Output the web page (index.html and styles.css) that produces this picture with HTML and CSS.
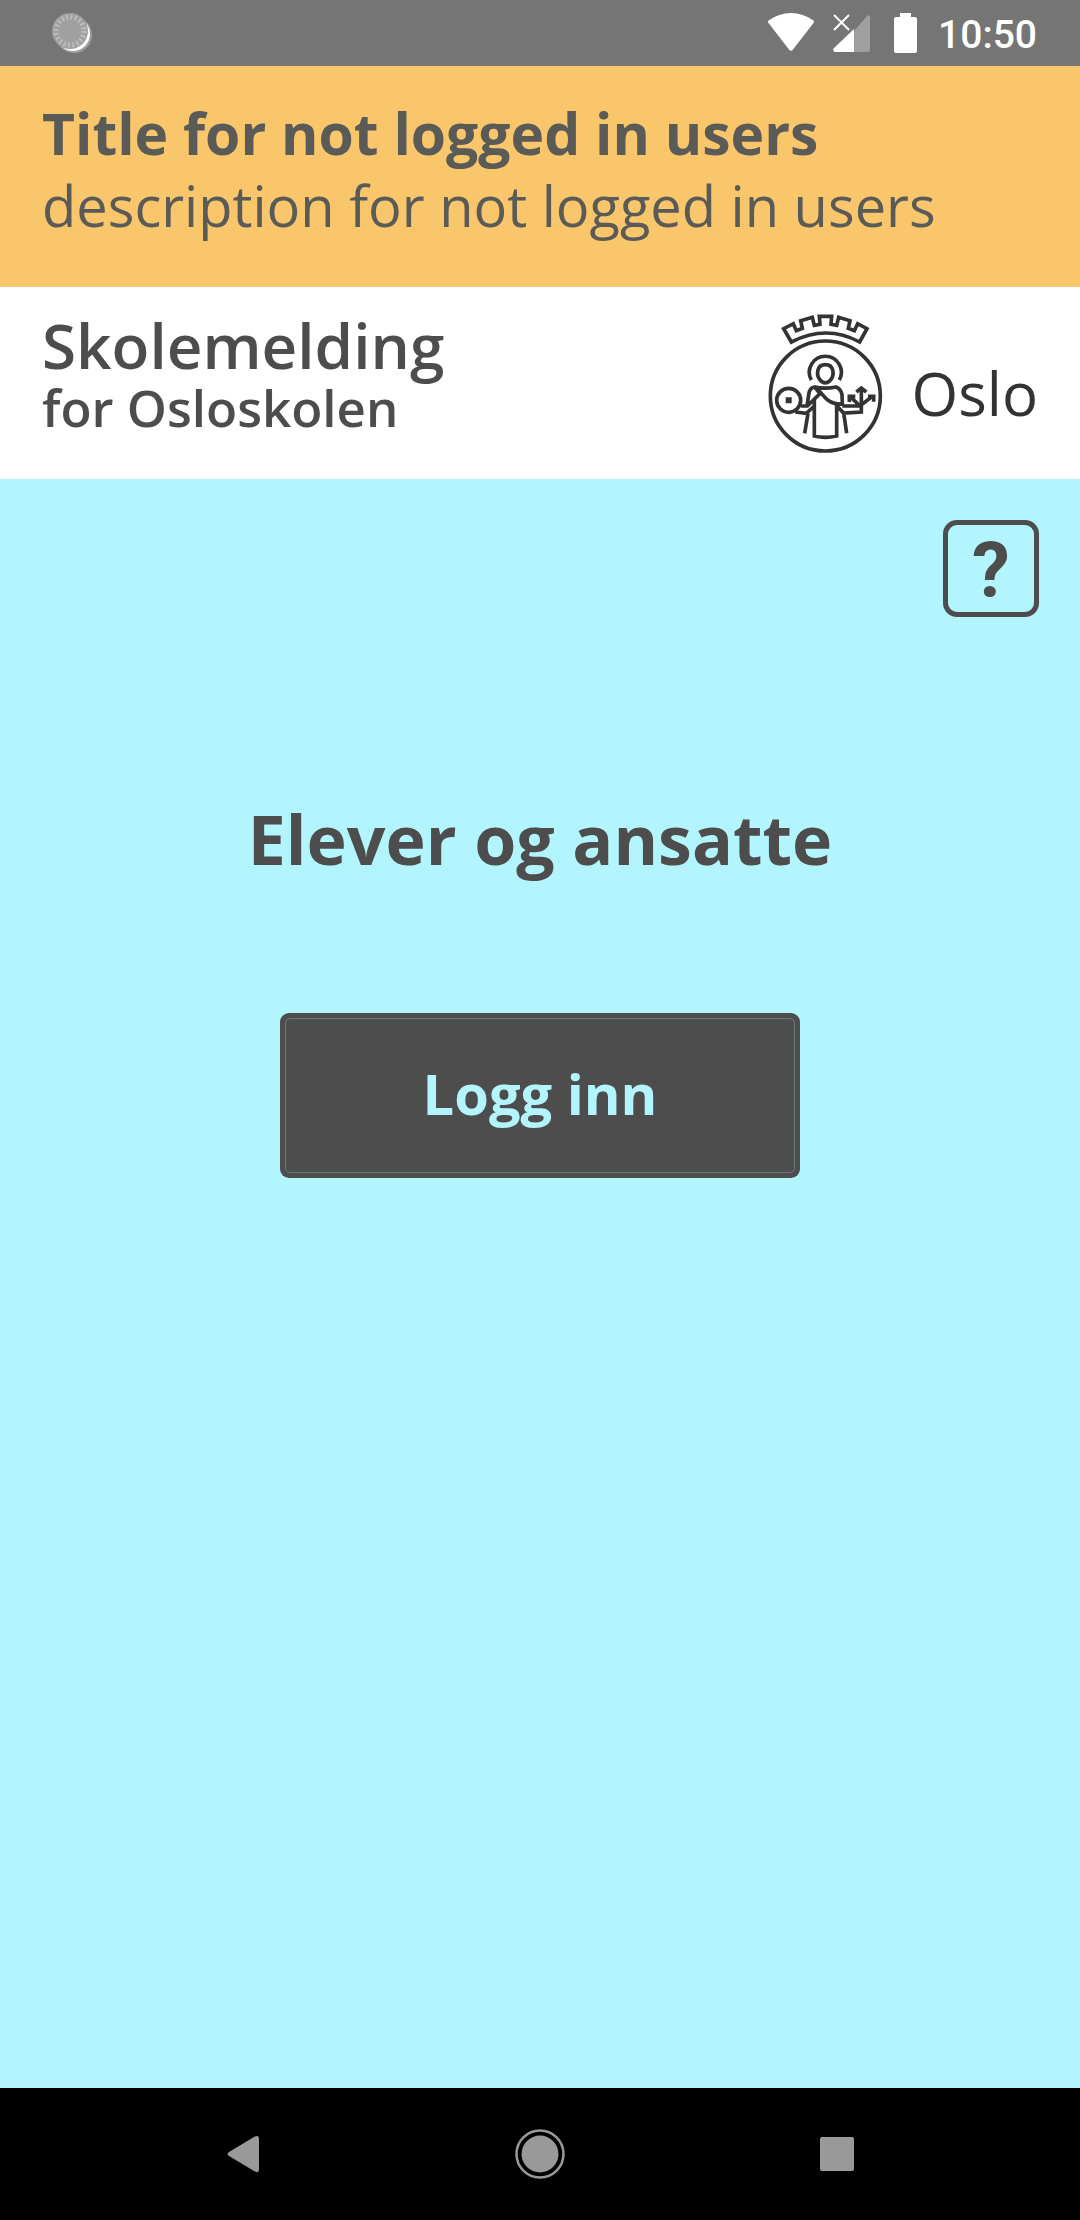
FILE: index.html
```html
<!DOCTYPE html>
<html lang="no">
<head>
  <meta charset="utf-8">
  <meta name="viewport" content="width=device-width, initial-scale=1">
  <title>Skolemelding</title>
  <link rel="stylesheet" href="styles.css">
</head>
<body>
  <div class="status-bar">
    <svg class="status-dial" width="40" height="42" viewBox="0 0 40 42" aria-hidden="true">
      <circle cx="22" cy="23" r="18" fill="#fff" opacity=".3"/>
      <circle cx="21" cy="22" r="17" fill="#fff"/>
      <circle cx="18" cy="19" r="18" fill="#a0a0a0"/>
      <circle cx="18" cy="19" r="14" fill="none" stroke="#bcbcbc" stroke-width="5" stroke-dasharray="2 2.398"/>
    </svg>
    <div class="status-icons">
      <svg class="icon-wifi" width="48" height="40" viewBox="0 0 48 40" aria-hidden="true">
        <path d="M1.500 10Q0 8.500 1.500 7.500Q12 0 24 0T46.500 7.500Q48 8.500 46.500 10L26 36.500Q24 39 22 36.500Z" fill="#fff"/>
      </svg>
      <svg class="icon-signal" width="38" height="40" viewBox="0 0 38 40" aria-hidden="true">
        <path d="M37 4V37Q37 39 35 39H21V18L34 3Q36 1 37 4Z" fill="#9f9f9f"/>
        <path d="M21 16V39H2Q-1 38 1 35Z" fill="#fff"/>
        <path d="M1 2L16 17M16 2L1 17" stroke="#fff" stroke-width="2"/>
      </svg>
      <svg class="icon-battery" width="23" height="40" viewBox="0 0 23 40" aria-hidden="true">
        <path d="M6 0H17V4H21Q23 4 23 6V38Q23 40 21 40H2Q0 40 0 38V6Q0 4 2 4H6Z" fill="#fff"/>
      </svg>
      <span class="clock">10:50</span>
    </div>
  </div>

  <section class="notice">
    <h2 class="notice-title">Title for not logged in users</h2>
    <p class="notice-text">description for not logged in users</p>
  </section>

  <header class="header">
    <h1 class="brand">
      <span class="brand-name">Skolemelding</span>
      <span class="brand-sub">for Osloskolen</span>
    </h1>
    <div class="logo">
      <svg width="115" height="139" viewBox="36 28 345 417" fill="none" stroke="#333" stroke-width="11" aria-hidden="true">
        <circle cx="208" cy="274" r="165"/>
        <path d="M106 112L83 72L112 57L121 78L139 71L134 48L169 38L175 62L192 59L190 35H227L225 59L242 62L248 38L282 48L277 71L295 78L305 57L333 72L311 112Q211 58 106 112Z"/>
        <path d="M166 226A48 48 0 1 1 250 226"/>
        <path d="M208 180C182 180 178 212 195 229Q208 240 221 229C238 212 234 180 208 180Z"/>
        <circle cx="98" cy="287" r="36"/>
        <path d="M91 280H105V294H91Z" fill="#333" stroke-width="4"/>
        <path d="M135 304H154L192 267L176 247Q161 248 158 270L153 304M118 322L151 326L175 304M156 326L146 386M175 281V394Q208 402 242 394V300M176 247Q208 254 240 247Q254 252 258 270L259 298Q223 300 204 275L180 248M239 300L263 325L316 322V252M259 304H312L348 276M312 304L285 278M263 325L272 386"/>
        <path d="M301 262L316 250L331 262M280 292V275H298M336 275H353V291"/>
      </svg>
      <span class="logo-text">Oslo</span>
    </div>
  </header>

  <main class="main">
    <button class="help" type="button" aria-label="Hjelp">?</button>
    <h2 class="login-title">Elever og ansatte</h2>
    <button class="login" type="button"><span class="login-label">Logg inn</span></button>
  </main>

  <nav class="nav-bar">
    <button class="nav-button" type="button" aria-label="Back">
      <svg width="34" height="38" viewBox="0 0 34 38" aria-hidden="true"><path d="M28 2Q33 -1 33 4V34Q33 39 28 36L3 21Q0 19 3 17Z" fill="#999"/></svg>
    </button>
    <button class="nav-button" type="button" aria-label="Home">
      <svg width="50" height="50" viewBox="0 0 50 50" aria-hidden="true"><circle cx="25" cy="25" r="23.500" fill="none" stroke="#999" stroke-width="2.500"/><circle cx="25" cy="25" r="18.500" fill="#999"/></svg>
    </button>
    <button class="nav-button" type="button" aria-label="Recent apps">
      <svg width="34" height="34" viewBox="0 0 34 34" aria-hidden="true"><rect width="34" height="34" rx="2" fill="#999"/></svg>
    </button>
  </nav>
</body>
</html>
```
FILE: styles.css
```css
* {
  box-sizing: border-box;
}

body {
  display: flex;
  flex-direction: column;
  min-height: 100vh;
  margin: 0;
  background: #b3f5ff;
  color: #4d4d4d;
  font-family: "Open Sans", "Noto Sans", sans-serif;
}

h1,
h2,
p {
  margin: 0;
}

button {
  margin: 0;
  padding: 0;
  border: 0;
  background: none;
  color: inherit;
  font: inherit;
}

svg {
  display: block;
}

.status-bar {
  display: flex;
  align-items: center;
  justify-content: space-between;
  height: 66px;
  padding: 0 43px 0 52px;
  background: #757575;
}

.status-icons {
  display: flex;
  align-items: center;
}

.icon-signal {
  margin-left: 18px;
}

.icon-battery {
  margin-left: 23px;
}

.clock {
  margin-left: 21px;
  padding-top: 3px;
  color: #fff;
  font: 500 39px/40px Roboto, sans-serif;
}

.notice {
  padding: 31px 42px 46px;
  background: #f9c66b;
  color: #5a5a57;
}

.notice-title {
  font-size: 57px;
  font-weight: 700;
  line-height: 72px;
}

.notice-text {
  font-size: 56px;
  line-height: 72px;
}

.header {
  display: flex;
  align-items: flex-start;
  justify-content: space-between;
  padding: 27px 42px 26px;
  background: #fff;
}

.brand {
  display: flex;
  flex-direction: column;
  font-weight: 600;
}

.brand-name {
  font-size: 62px;
  line-height: 62px;
}

.brand-sub {
  font-size: 51px;
  line-height: 62px;
}

.logo {
  display: flex;
  align-items: center;
  gap: 28px;
  color: #333;
}

.logo-text {
  padding-top: 18px;
  font-size: 60px;
  line-height: 64px;
}

.main {
  display: flex;
  flex: 1;
  flex-direction: column;
  align-items: center;
  padding: 41px;
}

.help {
  align-self: flex-end;
  width: 96px;
  height: 97px;
  padding-top: 2px;
  border: 5px solid #4d4d4d;
  border-radius: 14px;
  font: 700 76px/80px Roboto, sans-serif;
}

.login-title {
  margin-top: 177px;
  font-size: 68px;
  font-weight: 700;
  line-height: 90px;
}

.login {
  width: 520px;
  max-width: 100%;
  margin-top: 129px;
  padding: 5px;
  border-radius: 9px;
  background: #4d4d4d;
  color: #b3f5ff;
}

.login-label {
  display: block;
  padding: 37px 0 41px;
  border: 1px solid #667a7d;
  border-radius: 5px;
  font-size: 56px;
  font-weight: 700;
  line-height: 75px;
}

.nav-bar {
  display: flex;
  height: 132px;
  padding: 0 94px;
  background: #000;
}

.nav-button {
  display: flex;
  flex: 1;
  align-items: center;
  justify-content: center;
}
```
